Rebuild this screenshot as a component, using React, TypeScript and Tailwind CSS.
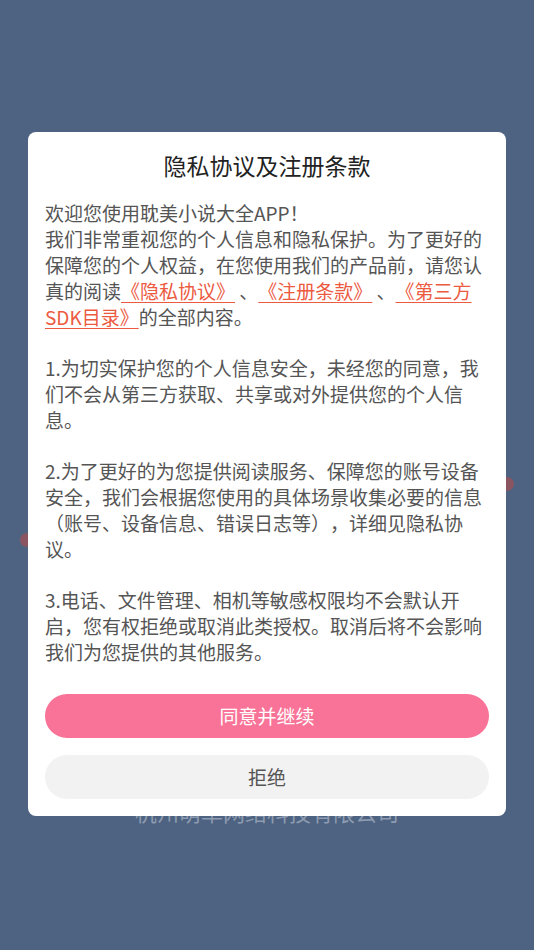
import React from 'react'

const font = { fontFamily: '"Noto Sans CJK SC", "Noto Sans", Roboto, sans-serif' }

function Link({ children }: { children: React.ReactNode }) {
  return <span className="text-[#ec5a3f] underline underline-offset-[3px] decoration-1">{children}</span>
}

export default function App() {
  return (
    <div className="relative w-[534px] h-[950px] bg-[#4d6381] overflow-hidden [text-spacing-trim:space-all]" style={font}>
      {/* background page (dimmed) */}
      <div className="absolute left-[20px] top-[533px] w-[14px] h-[14px] rounded-full bg-[#8a5560]" />
      <div className="absolute left-[500px] top-[477px] w-[14px] h-[14px] rounded-full bg-[#8a5560]" />
      <div className="absolute left-0 right-0 top-[796px] text-center text-[22px] leading-[30px] text-[#8e9bb0]">
        杭州萌草网络科技有限公司
      </div>

      {/* dialog */}
      <div className="absolute left-[28px] top-[132px] w-[478px] bg-white rounded-[8px] px-[17px] pt-[18px] pb-[17px]">
        <h1 className="text-center text-[23px] leading-[30px] text-[#222] mb-[20px]">隐私协议及注册条款</h1>
        <div className="text-[19px] leading-[26px] text-[#555]">
          <p className="mb-[25px]">
            欢迎您使用耽美小说大全APP！
            <br />
            我们非常重视您的个人信息和隐私保护。为了更好的保障您的个人权益，在您使用我们的产品前，请您认真的阅读
            <Link>《隐私协议》</Link> 、<Link>《注册条款》</Link> 、<Link>《第三方SDK目录》</Link>的全部内容。
          </p>
          <p className="mb-[25px]">
            1.为切实保护您的个人信息安全，未经您的同意，我们不会从第三方获取、共享或对外提供您的个人信息。
          </p>
          <p className="mb-[25px]">
            2.为了更好的为您提供阅读服务、保障您的账号设备安全，我们会根据您使用的具体场景收集必要的信息（账号、设备信息、错误日志等），详细见隐私协议。
          </p>
          <p>3.电话、文件管理、相机等敏感权限均不会默认开启，您有权拒绝或取消此类授权。取消后将不会影响我们为您提供的其他服务。</p>
        </div>
        <div className="mt-[29px] flex flex-col gap-[17px]">
          <button className="h-[44px] w-full rounded-full bg-[#f87397] text-white text-[19px]">同意并继续</button>
          <button className="h-[44px] w-full rounded-full bg-[#f2f2f2] text-[#555] text-[19px]">拒绝</button>
        </div>
      </div>
    </div>
  )
}
